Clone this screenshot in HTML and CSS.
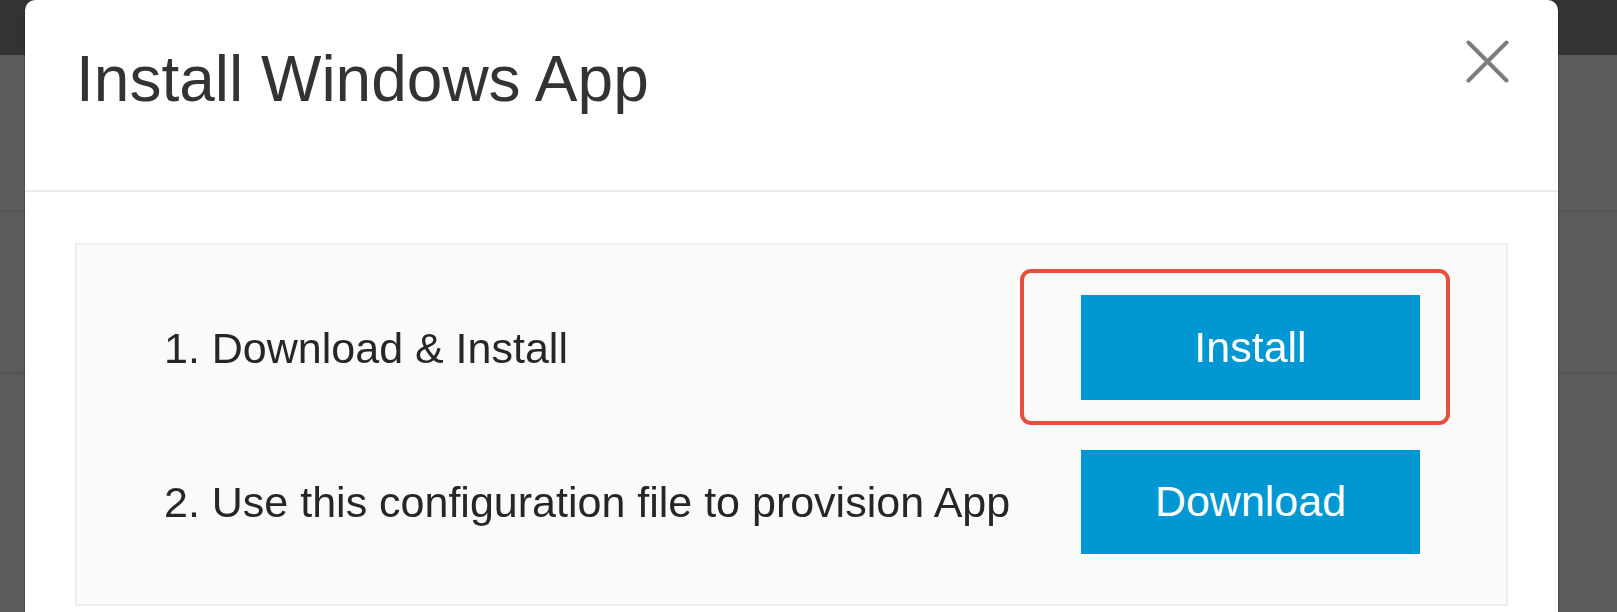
FILE: index.html
```html
<!DOCTYPE html>
<html lang="en">
<head>
<meta charset="utf-8">
<title>Install Windows App</title>
<link rel="stylesheet" href="styles.css">
</head>
<body>
  <div class="backdrop">
    <div class="bg-topbar"></div>
    <div class="bg-row bg-row-a"></div>
    <div class="bg-row bg-row-b"></div>
    <div class="bg-row"></div>
  </div>

  <div class="modal" role="dialog" aria-labelledby="modal-title">
    <div class="modal-header">
      <h1 class="modal-title" id="modal-title">Install Windows App</h1>
      <button class="modal-close" aria-label="Close">
        <svg width="43" height="43" viewBox="0 0 43 43" aria-hidden="true">
          <path d="M2.5 2.5 L40.5 40.5 M40.5 2.5 L2.5 40.5" stroke="#7d7d7d" stroke-width="4" stroke-linecap="round" fill="none"/>
        </svg>
      </button>
    </div>
    <div class="modal-body">
      <div class="steps">
        <div class="step">
          <span class="step-label">1. Download &amp; Install</span>
          <div class="btn-wrap">
            <button class="btn">Install</button>
            <span class="highlight"></span>
          </div>
        </div>
        <div class="step">
          <span class="step-label">2. Use this configuration file to provision App</span>
          <div class="btn-wrap">
            <button class="btn">Download</button>
          </div>
        </div>
      </div>
    </div>
  </div>
</body>
</html>
```

FILE: styles.css
```css
* {
  box-sizing: border-box;
}

html, body {
  margin: 0;
  padding: 0;
  height: 100%;
  overflow: hidden;
}

body {
  background: #5c5c5c;
  font-family: "Liberation Sans", Arial, sans-serif;
}

.backdrop {
  display: flex;
  flex-direction: column;
}

.bg-topbar {
  height: 55px;
  background: #333333;
}

.bg-row {
  border-bottom: 2px solid #565656;
}

.bg-row-a {
  height: 157px;
}

.bg-row-b {
  height: 161px;
}

.modal {
  position: fixed;
  left: 25px;
  top: 0;
  width: 1533px;
  height: 700px;
  background: #ffffff;
  border-radius: 10px;
  box-shadow: 0 0 2px rgba(0, 0, 0, 0.6);
  overflow: hidden;
}

.modal-header {
  height: 192px;
  border-bottom: 2px solid #ececec;
  display: flex;
  justify-content: space-between;
  align-items: flex-start;
  padding: 40px 49px 0 51px;
}

.modal-title {
  margin: 2px 0 0 0;
  font-size: 64px;
  line-height: 74px;
  font-weight: normal;
  color: #333333;
}

.modal-close {
  border: 0;
  padding: 0;
  margin: 0;
  background: transparent;
  width: 43px;
  height: 43px;
  display: block;
  cursor: pointer;
}

.modal-close svg {
  display: block;
}

.modal-body {
  padding: 51px 50px 0 50px;
}

.steps {
  background: #fafafa;
  border: 2px solid #eeeeee;
  padding: 50px 86px 50px 87px;
  display: flex;
  flex-direction: column;
  gap: 49px;
}

.step {
  display: flex;
  align-items: center;
  justify-content: space-between;
  height: 105px;
}

.step-label {
  font-size: 43px;
  color: #262626;
  line-height: 50px;
}

.btn-wrap {
  position: relative;
}

.btn {
  width: 339px;
  height: 105px;
  border: 0;
  margin: 0;
  padding: 0;
  background: #0097d2;
  color: #ffffff;
  font-family: "Liberation Sans", Arial, sans-serif;
  font-size: 43px;
  display: block;
  cursor: pointer;
}

.step + .step .btn {
  height: 104px;
}

.highlight {
  position: absolute;
  left: -61px;
  top: -26px;
  width: 430px;
  height: 156px;
  border: 4px solid #e4503b;
  border-radius: 11px;
  pointer-events: none;
}
```
